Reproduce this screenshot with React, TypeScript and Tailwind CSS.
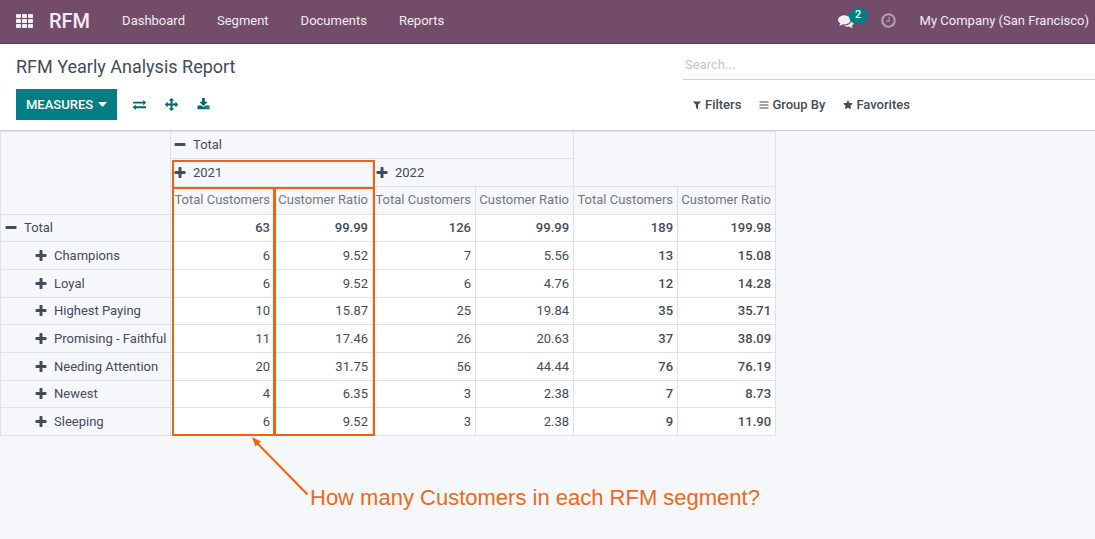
import { useState } from 'react';

const ICONS = {
  exchange:
    'M1792 1184v192q0 13-9.5 22.5t-22.5 9.5h-1376v192q0 13-9.5 22.5t-22.5 9.5q-12 0-24-10l-319-320q-9-9-9-22 0-14 9-23l320-320q9-9 23-9 13 0 22.5 9.5t9.5 22.5v192h1376q13 0 22.5 9.5t9.5 22.5zm0-544q0 14-9 23l-320 320q-9 9-23 9-13 0-22.5-9.5t-9.5-22.5v-192h-1376q-13 0-22.5-9.5t-9.5-22.5v-192q0-13 9.5-22.5t22.5-9.5h1376v-192q0-14 9-23t23-9q12 0 24 10l319 319q9 9 9 23z',
  arrows:
    'M1792 896q0 26-19 45l-256 256q-19 19-45 19t-45-19-19-45v-128h-384v384h128q26 0 45 19t19 45-19 45l-256 256q-19 19-45 19t-45-19l-256-256q-19-19-19-45t19-45 45-19h128v-384h-384v128q0 26-19 45t-45 19-45-19l-256-256q-19-19-19-45t19-45l256-256q19-19 45-19t45 19 19 45v128h384v-384h-128q-26 0-45-19t-19-45 19-45l256-256q19-19 45-19t45 19l256 256q19 19 19 45t-19 45-45 19h-128v384h384v-128q0-26 19-45t45-19 45 19l256 256q19 19 19 45z',
  download:
    'M1344 1344q0-26-19-45t-45-19-45 19-19 45 19 45 45 19 45-19 19-45zm256 0q0-26-19-45t-45-19-45 19-19 45 19 45 45 19 45-19 19-45zm128-224v320q0 40-28 68t-68 28h-1472q-40 0-68-28t-28-68v-320q0-40 28-68t68-28h465l135 136q58 56 136 56t136-56l136-136h464q40 0 68 28t28 68zm-325-569q17 41-14 70l-448 448q-18 19-45 19t-45-19l-448-448q-31-29-14-70 17-39 59-39h256v-448q0-26 19-45t45-19h256q26 0 45 19t19 45v448h256q42 0 59 39z',
  comments:
    'M1408 768q0 139-94 257t-256.5 186.5-353.5 68.5q-86 0-176-16-124 88-278 128-36 9-86 16h-3q-11 0-20.5-8t-11.5-21q-1-3-1-6.5t.5-6.5 2-6l2.5-5 3.5-5.5 4-5 4.5-5 4-4.5q5-6 23-25t26-29.5 22.5-29 25-38.5 20.5-44q-124-72-195-177t-71-224q0-139 94-257t256.5-186.5 353.5-68.5 353.5 68.5 256.5 186.5 94 257zm384 256q0 120-71 224.5t-195 176.5q10 24 20.5 44t25 38.5 22.5 29 26 29.5 23 25q1 1 4 4.5t4.5 5 4 5 3.5 5.5l2.5 5 2 6 .5 6.5-1 6.5q-3 14-13 22t-22 7q-50-7-86-16-154-40-278-128-90 16-176 16-271 0-472-132 58 4 88 4 161 0 309-45t264-129q125-92 192-212t67-254q0-77-23-152 129 71 204 178t75 230z',
  clock:
    'M1024 544v448q0 14-9 23t-23 9h-320q-14 0-23-9t-9-23v-64q0-14 9-23t23-9h224v-352q0-14 9-23t23-9h64q14 0 23 9t9 23zm416 352q0-148-73-273t-198-198-273-73-273 73-198 198-73 273 73 273 198 198 273 73 273-73 198-198 73-273zm224 0q0 209-103 385.5t-279.5 279.5-385.5 103-385.5-103-279.5-279.5-103-385.5 103-385.5 279.5-279.5 385.5-103 385.5 103 279.5 279.5 103 385.5z',
  plus: 'M1600 736v192q0 40-28 68t-68 28h-416v416q0 40-28 68t-68 28h-192q-40 0-68-28t-28-68v-416h-416q-40 0-68-28t-28-68v-192q0-40 28-68t68-28h416v-416q0-40 28-68t68-28h192q40 0 68 28t28 68v416h416q40 0 68 28t28 68z',
  minus:
    'M1600 736v192q0 40-28 68t-68 28h-1216q-40 0-68-28t-28-68v-192q0-40 28-68t68-28h1216q40 0 68 28t28 68z',
  filter:
    'M1595 295q17 41-14 70l-493 493v742q0 42-39 59-13 5-25 5-27 0-45-19l-256-256q-19-19-19-45v-486l-493-493q-31-29-14-70 17-39 59-39h1280q42 0 59 39z',
  bars: 'M90 269h1612v179h-1612zM90 806h1612v179h-1612zM90 1344h1612v179h-1612z',
  star: 'M1728 647q0 22-26 48l-363 354 86 500q1 7 1 20 0 21-10.5 35.5t-30.5 14.5q-19 0-40-12l-449-236-449 236q-22 12-40 12-21 0-31.5-14.5t-10.5-35.5q0-6 2-20l86-500-364-354q-25-27-25-48 0-37 56-46l502-73 225-455q19-41 49-41t49 41l225 455 502 73q56 9 56 46z',
};

type IconName = keyof typeof ICONS;

function Icon({ name, className }: { name: IconName; className: string }) {
  return (
    <svg viewBox="0 0 1792 1792" fill="currentColor" aria-hidden="true" className={`shrink-0 ${className}`}>
      <path d={ICONS[name]} />
    </svg>
  );
}

const MENU = ['Dashboard', 'Segment', 'Documents', 'Reports'];
const MEASURES = ['Total Customers', 'Customer Ratio'];
const ROWS = [
  { label: 'Total', values: ['63', '99.99', '126', '99.99', '189', '199.98'] },
  { label: 'Champions', values: ['6', '9.52', '7', '5.56', '13', '15.08'] },
  { label: 'Loyal', values: ['6', '9.52', '6', '4.76', '12', '14.28'] },
  { label: 'Highest Paying', values: ['10', '15.87', '25', '19.84', '35', '35.71'] },
  { label: 'Promising - Faithful', values: ['11', '17.46', '26', '20.63', '37', '38.09'] },
  { label: 'Needing Attention', values: ['20', '31.75', '56', '44.44', '76', '76.19'] },
  { label: 'Newest', values: ['4', '6.35', '3', '2.38', '7', '8.73'] },
  { label: 'Sleeping', values: ['6', '9.52', '3', '2.38', '9', '11.90'] },
];

const HEAD_CELL = 'border border-[#dee2e6] bg-[#f6f7fb] p-0 text-left font-normal';

function Toggle({ open, label, className }: { open: boolean; label: string; className: string }) {
  return (
    <button type="button" className={`flex items-center gap-1.5 whitespace-nowrap ${className}`}>
      <Icon name={open ? 'minus' : 'plus'} className="size-[14px]" />
      {label}
    </button>
  );
}

function NavBar() {
  return (
    <header className="flex h-11 items-center border-b border-[#5a3c50] bg-[#734c69] pr-1.5 pb-0.5 pl-4 text-[13px] text-[#f1edf0]">
      <button type="button" aria-label="Apps">
        <svg viewBox="0 0 17 14" className="h-[14px] w-[17px]" fill="currentColor">
          {[0, 5, 10].map((y) =>
            [0, 6, 12].map((x) => <rect key={`${x}-${y}`} x={x} y={y} width="5" height="4" rx="0.7" />),
          )}
        </svg>
      </button>
      <a href="#rfm" className="ml-4 text-xl leading-none font-medium">
        RFM
      </a>
      <nav className="ml-8 flex gap-8">
        {MENU.map((item) => (
          <a key={item} href={`#${item.toLowerCase()}`}>
            {item}
          </a>
        ))}
      </nav>
      <div className="ml-auto flex items-center">
        <button type="button" aria-label="Conversations" className="relative mr-[26px]">
          <Icon name="comments" className="size-4" />
          <span className="absolute -top-[5px] left-[11px] flex h-4 w-[19px] items-center justify-center rounded-full bg-[#017e84] text-[11px] font-medium text-white">
            2
          </span>
        </button>
        <button type="button" aria-label="Activities" className="mr-[23px] opacity-50">
          <Icon name="clock" className="size-[17px]" />
        </button>
        <a href="#company" className="whitespace-nowrap">
          My Company (San Francisco)
        </a>
      </div>
    </header>
  );
}

function ControlPanel() {
  const [query, setQuery] = useState('');
  return (
    <section className="grid grid-cols-[683px_1fr] border-b border-[#ced0d6] bg-white">
      <div className="px-4 pt-3 pb-2.5">
        <h1 className="text-lg leading-[22px]">RFM Yearly Analysis Report</h1>
        <div className="mt-[11px] flex items-center text-[#01696e]">
          <button
            type="button"
            className="flex h-[31px] items-center gap-[5px] bg-[#017e84] px-2.5 text-[13px] font-medium text-white uppercase"
          >
            Measures
            <svg viewBox="0 0 9 5" className="h-[5px] w-[9px]" fill="currentColor" aria-hidden="true">
              <path d="M0 0h9L4.500 5z" />
            </svg>
          </button>
          <div className="ml-4 flex gap-[19px]">
            <button type="button" aria-label="Flip axis">
              <Icon name="exchange" className="size-[13px]" />
            </button>
            <button type="button" aria-label="Expand all">
              <Icon name="arrows" className="size-[13px]" />
            </button>
            <button type="button" aria-label="Download">
              <Icon name="download" className="size-[13px]" />
            </button>
          </div>
        </div>
      </div>
      <div className="pt-2">
        <input
          type="search"
          aria-label="Search"
          placeholder="Search..."
          value={query}
          onChange={(e) => setQuery(e.target.value)}
          className="block h-7 w-full border-b border-[#ced0d6] px-0.5 pb-0.5 text-[13px] outline-none placeholder:text-[#c4c6cb]"
        />
        <div className="mt-4 flex items-center gap-[18px] pl-[9px] text-[13px] leading-[18px] font-medium">
          <button type="button" className="flex items-center gap-[3px]">
            <Icon name="filter" className="size-2.5" />
            Filters
          </button>
          <button type="button" className="flex items-center gap-[3px]">
            <Icon name="bars" className="size-2.5" />
            Group By
          </button>
          <button type="button" className="flex items-center gap-[3px]">
            <Icon name="star" className="size-2.5" />
            Favorites
          </button>
        </div>
      </div>
    </section>
  );
}

function PivotTable() {
  return (
    <table className="w-[776px] table-fixed border-collapse text-[13px] leading-5">
      <colgroup>
        <col className="w-[170px]" />
        <col className="w-[104px]" />
        <col className="w-[98px]" />
        <col className="w-[103px]" />
        <col className="w-[98px]" />
        <col className="w-[104px]" />
        <col className="w-[98px]" />
      </colgroup>
      <thead>
        <tr className="h-[27px]">
          <th rowSpan={3} className={HEAD_CELL} />
          <th colSpan={4} className={HEAD_CELL}>
            <Toggle open label="Total" className="pl-0.5" />
          </th>
          <th colSpan={2} rowSpan={2} className={HEAD_CELL} />
        </tr>
        <tr className="h-7">
          <th colSpan={2} className={HEAD_CELL}>
            <Toggle open={false} label="2021" className="pl-0.5" />
          </th>
          <th colSpan={2} className={HEAD_CELL}>
            <Toggle open={false} label="2022" className="pl-0.5" />
          </th>
        </tr>
        <tr className="h-7 text-[#73777f]">
          {[0, 1, 2].map((group) =>
            MEASURES.map((m) => (
              <th
                key={`${group}-${m}`}
                className="border border-[#dee2e6] bg-[#f6f7fb] pt-0 pr-1 pb-0.5 pl-0 text-right font-normal whitespace-nowrap"
              >
                {m}
              </th>
            )),
          )}
        </tr>
      </thead>
      <tbody>
        {ROWS.map((row, r) => (
          <tr key={row.label} className={r % 3 === 0 ? 'h-[27px]' : 'h-7'}>
            <th scope="row" className={HEAD_CELL}>
              <Toggle open={r === 0} label={row.label} className={r === 0 ? 'pl-[3px]' : 'pl-[33px]'} />
            </th>
            {row.values.map((value, c) => (
              <td
                key={c}
                className={`border border-[#dee2e6] bg-white px-1 py-0 text-right ${
                  r === 0 || c > 3 ? 'font-medium' : ''
                }`}
              >
                {value}
              </td>
            ))}
          </tr>
        ))}
      </tbody>
    </table>
  );
}

function Annotations() {
  return (
    <>
      <div className="pointer-events-none absolute top-[29px] left-[172px] h-[29px] w-[203px] border-2 border-[#f26010]" />
      <div className="pointer-events-none absolute top-14 left-[172px] h-[249px] w-[103px] border-2 border-[#f26010]" />
      <div className="pointer-events-none absolute top-14 left-[274px] h-[249px] w-[101px] border-2 border-[#f26010]" />
      <svg
        viewBox="0 0 58 60"
        className="pointer-events-none absolute top-[305px] left-[251px] h-[60px] w-[58px]"
        aria-hidden="true"
      >
        <path d="M6 7 56.500 58.500" stroke="#fb640c" strokeWidth="2" />
        <path d="M1 1 10 5.500 4.500 10.500z" fill="#fb640c" />
      </svg>
      <p className="absolute top-[354px] left-[310px] text-[22px] leading-[26px] whitespace-nowrap text-[#ea6a20] [font-family:'Liberation_Sans',Arial,sans-serif]">
        How many Customers in each RFM segment?
      </p>
    </>
  );
}

export default function App() {
  return (
    <div className="min-h-screen bg-[#f6f7fb] text-[#444b5a] [font-family:Roboto,sans-serif]">
      <NavBar />
      <ControlPanel />
      <main className="relative">
        <PivotTable />
        <Annotations />
      </main>
    </div>
  );
}
